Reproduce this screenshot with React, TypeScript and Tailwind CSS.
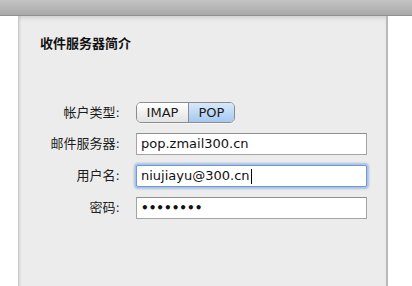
import React from "react";

const cjk = "font-['Lucida_Grande','DejaVu_Sans','Noto_Sans_CJK_SC',sans-serif]";

function Field({ label, children }: { label: string; children: React.ReactNode }) {
  return (
    <div className="flex items-center">
      <div className={`w-[101px] text-right text-[13px] text-[#1c1c1c] ${cjk}`}>{label}</div>
      <div className="ml-[16px] flex-1">{children}</div>
    </div>
  );
}

export default function App() {
  return (
    <div className="flex h-[286px] w-[412px] flex-col overflow-hidden bg-white">
      {/* window toolbar strip */}
      <div className="h-[16px] shrink-0 border-b border-[#8e8e8e] bg-gradient-to-b from-[#c4c4c4] to-[#a9a9a9]" />

      <div className="flex flex-1 pl-[18px] pr-[24px]">
        <div className="flex flex-1 flex-col border-l border-r-2 border-l-[#c8c8c8] border-r-[#b9b9b9] bg-[#ececec] pl-[21px] pr-[19px] pt-[20px] shadow-[inset_0_4px_4px_-2px_rgba(0,0,0,0.12),inset_3px_0_3px_-2px_rgba(0,0,0,0.08)]">
          <h2 className={`text-[13px] font-bold leading-[16px] text-[#111] ${cjk}`}>收件服务器简介</h2>

          <div className="ml-[-21px] mt-[50px] flex flex-col gap-[10px]">
            <Field label="帐户类型:">
              <div className="flex h-[21px] w-[99px] overflow-hidden rounded-[5px] border border-[#8c8c8c] font-['DejaVu_Sans',sans-serif] text-[13px] text-[#1a1a1a] shadow-[0_1px_0_rgba(255,255,255,0.6)]">
                <div className="flex flex-1 items-center justify-center border-r border-[#8c8c8c] bg-gradient-to-b from-white to-[#e2e2e2]">IMAP</div>
                <div className="flex w-[45px] items-center justify-center bg-gradient-to-b from-[#d8e8fb] to-[#a6c8f0]">POP</div>
              </div>
            </Field>
            <Field label="邮件服务器:">
              <div className="flex h-[22px] items-center border border-[#a4a4a4] border-t-[#8e8e8e] bg-white pl-[4px] font-['DejaVu_Sans',sans-serif] text-[13px] text-[#111]">
                pop.zmail300.cn
              </div>
            </Field>
            <Field label="用户名:">
              <div className="flex h-[22px] items-center rounded-[2px] border border-[#6f9ad6] bg-white pl-[4px] font-['DejaVu_Sans',sans-serif] text-[13px] text-[#111] shadow-[0_0_2px_2px_rgba(112,156,220,0.55)]">
                niujiayu@300.cn
                <span className="ml-[1px] h-[15px] w-px bg-black" />
              </div>
            </Field>
            <Field label="密码:">
              <div className="flex h-[22px] items-center border border-[#a4a4a4] border-t-[#8e8e8e] bg-white pl-[4px] font-['DejaVu_Sans',sans-serif] text-[12px] font-bold text-[#111]">
                ••••••••
              </div>
            </Field>
          </div>
        </div>
      </div>
    </div>
  );
}
